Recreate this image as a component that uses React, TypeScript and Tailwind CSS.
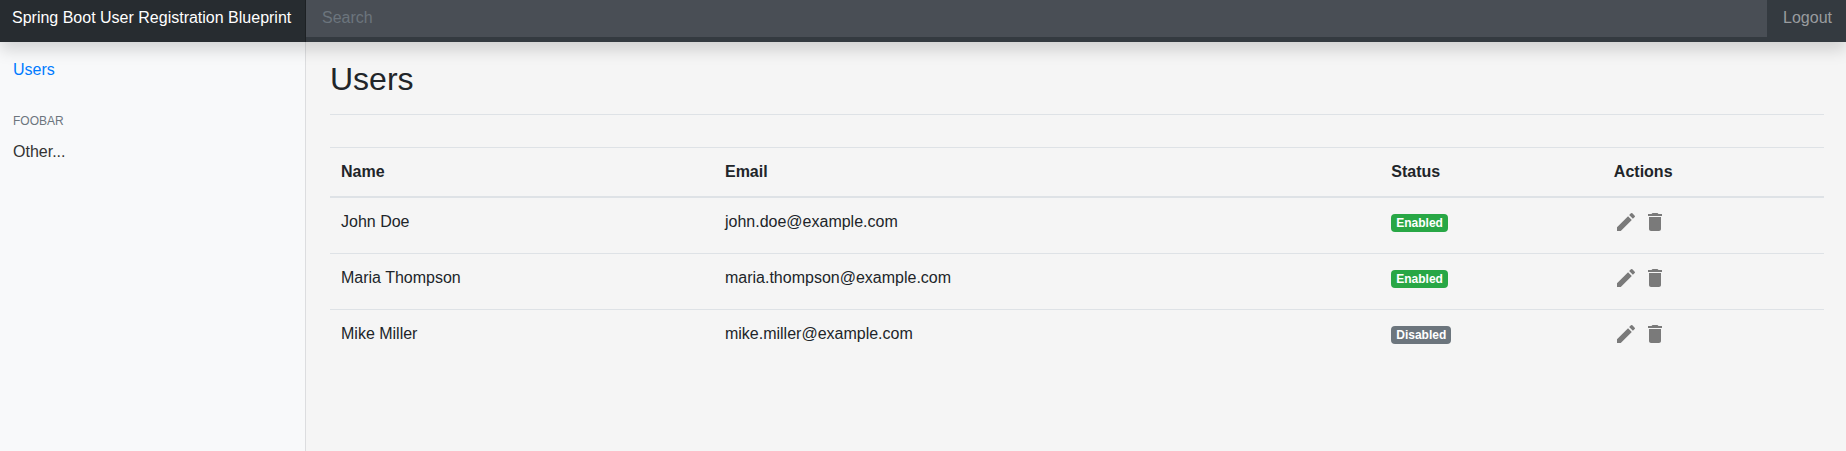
import { MdDelete, MdEdit } from "react-icons/md";

type Status = "Enabled" | "Disabled";

interface User {
  name: string;
  email: string;
  status: Status;
}

const users: User[] = [
  { name: "John Doe", email: "john.doe@example.com", status: "Enabled" },
  { name: "Maria Thompson", email: "maria.thompson@example.com", status: "Enabled" },
  { name: "Mike Miller", email: "mike.miller@example.com", status: "Disabled" },
];

function TopBar() {
  return (
    <header className="relative z-10 flex items-stretch bg-[#343a40] shadow-[0_8px_16px_rgba(0,0,0,0.15)]">
      <a
        href="#"
        className="w-[306px] shrink-0 border-r border-[#1d2124] bg-[#272c30] pt-[6px] pb-3 pl-3 whitespace-nowrap text-white"
      >
        Spring Boot User Registration Blueprint
      </a>
      <input
        type="text"
        aria-label="Search"
        placeholder="Search"
        className="mb-[5px] min-w-0 flex-1 bg-[#494e55] px-4 pt-[6px] pb-[7px] text-white outline-none placeholder:text-[#6c757d]"
      />
      <a href="#" className="pt-[6px] pr-[14px] pl-4 text-[#999c9f]">
        Logout
      </a>
    </header>
  );
}

function Sidebar() {
  return (
    <nav className="w-[306px] shrink-0 border-r border-[#dcdddf] bg-[#f8f9fa] px-[13px] pt-4">
      <a href="#" className="block text-[#007bff]">
        Users
      </a>
      <h2 className="mt-[31px] text-xs leading-4 text-[#6c757d] uppercase">Foobar</h2>
      <a href="#" className="mt-[11px] block text-[#333333]">
        Other...
      </a>
    </nav>
  );
}

function StatusBadge({ status }: { status: Status }) {
  const color = status === "Enabled" ? "bg-[#28a745]" : "bg-[#6c757d]";
  return (
    <span className={`inline-block rounded px-[5px] py-[3px] text-xs leading-3 font-bold text-white ${color}`}>
      {status}
    </span>
  );
}

function UserRow({ user }: { user: User }) {
  return (
    <tr className="align-top">
      <td className="py-3 pr-3 pl-[11px]">{user.name}</td>
      <td className="py-3 pr-3 pl-[11px]">{user.email}</td>
      <td className="py-3 pr-3 pl-[11px]">
        <StatusBadge status={user.status} />
      </td>
      <td className="py-3 pr-3 pl-[11px]">
        <div className="flex h-[31px] items-start gap-[5px] text-[#7a7a7a]">
          <button type="button" aria-label={`Edit ${user.name}`}>
            <MdEdit size={24} />
          </button>
          <button type="button" aria-label={`Delete ${user.name}`}>
            <MdDelete size={24} />
          </button>
        </div>
      </td>
    </tr>
  );
}

export default function App() {
  return (
    <div className="flex min-h-screen flex-col bg-[#f5f5f5] font-['Liberation_Sans',Arial,sans-serif] text-base leading-6 text-[#212529]">
      <TopBar />
      <div className="flex flex-1">
        <Sidebar />
        <main className="min-w-0 flex-1 pt-4 pr-[22px] pl-6">
          <h1 className="border-b border-[#dee2e6] pt-[2px] pb-4 text-[32px] leading-[38px]">Users</h1>
          <table className="mt-8 w-full table-fixed border-separate border-spacing-0 border-t border-[#dee2e6] text-left [&_tbody_tr+tr_td]:border-t [&_tbody_tr+tr_td]:border-[#dee2e6]">
            <colgroup>
              <col className="w-[25.7%]" />
              <col className="w-[44.6%]" />
              <col className="w-[14.9%]" />
              <col className="w-[14.8%]" />
            </colgroup>
            <thead>
              <tr>
                {["Name", "Email", "Status", "Actions"].map((label) => (
                  <th key={label} scope="col" className="border-b-2 border-[#dee2e6] py-3 pr-3 pl-[11px] font-bold">
                    {label}
                  </th>
                ))}
              </tr>
            </thead>
            <tbody>
              {users.map((user) => (
                <UserRow key={user.email} user={user} />
              ))}
            </tbody>
          </table>
        </main>
      </div>
    </div>
  );
}
